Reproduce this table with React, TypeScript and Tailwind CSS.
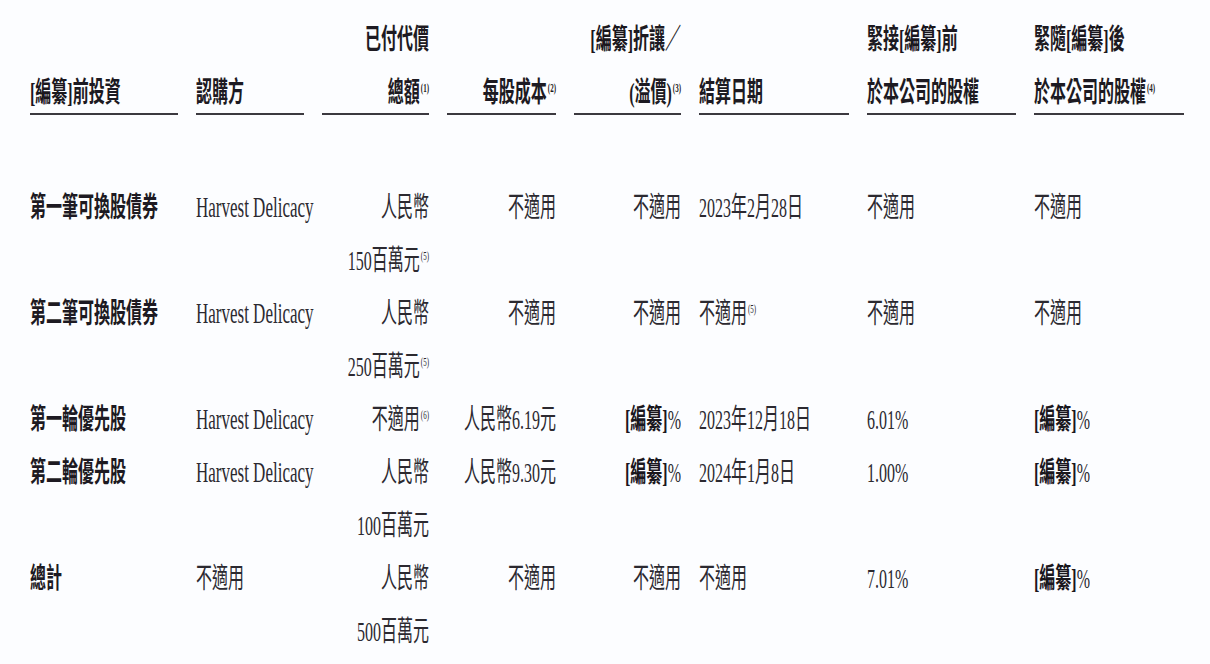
import React from 'react'

const grid = 'grid grid-cols-[148px_108px_107px_109px_107px_150px_149px_150px] gap-x-[18px]'

type Align = 'left' | 'right'

// text in the scan is squeezed sideways, so every run is stretched vertically
const T = ({ children, bold }: { children: React.ReactNode; bold?: boolean }) => (
  <span className={`inline-block origin-center scale-y-[1.75] ${bold ? 'font-bold text-[#1d1a22]' : 'font-normal text-[#2b2930]'}`}>
    {children}
  </span>
)

const Note = ({ n }: { n: number }) => (
  <span className="relative -top-[6px] ml-[1px] text-[7px] leading-none">({n})</span>
)

const Red = () => <span className="font-bold text-[#1a171d]">[編纂]</span>

const Latin = ({ children }: { children: React.ReactNode }) => <span className="text-[17px]">{children}</span>

const alignCls = (a: Align) => (a === 'right' ? 'text-right' : 'text-left')

const HeadCell = ({ top, bottom, align }: { top?: React.ReactNode; bottom: React.ReactNode; align: Align }) => (
  <div className="border-b-2 border-[#3b393f]">
    <div className={`-mb-[6px] leading-[53px] ${alignCls(align)}`}>
      <div className="h-[53px]">{top ? <T bold>{top}</T> : null}</div>
      <div className="h-[53px]">
        <T bold>{bottom}</T>
      </div>
    </div>
  </div>
)

const Cell = ({ lines, align, bold }: { lines: React.ReactNode[]; align: Align; bold?: boolean }) => (
  <div className={`leading-[53px] ${alignCls(align)}`}>
    {lines.map((l, i) => (
      <div key={i} className="h-[53px] whitespace-nowrap">
        <T bold={bold}>{l}</T>
      </div>
    ))}
  </div>
)

const aligns: Align[] = ['left', 'left', 'right', 'right', 'right', 'left', 'left', 'left']

const hd = <Latin>Harvest Delicacy</Latin>

const rows: React.ReactNode[][][] = [
  [
    ['第一筆可換股債券'],
    [hd],
    ['人民幣', <>150百萬元<Note n={5} /></>],
    ['不適用'],
    ['不適用'],
    ['2023年2月28日'],
    ['不適用'],
    ['不適用'],
  ],
  [
    ['第二筆可換股債券'],
    [hd],
    ['人民幣', <>250百萬元<Note n={5} /></>],
    ['不適用'],
    ['不適用'],
    [<>不適用<Note n={5} /></>],
    ['不適用'],
    ['不適用'],
  ],
  [
    ['第一輪優先股'],
    [hd],
    [<>不適用<Note n={6} /></>],
    ['人民幣6.19元'],
    [<><Red />%</>],
    ['2023年12月18日'],
    ['6.01%'],
    [<><Red />%</>],
  ],
  [
    ['第二輪優先股'],
    [hd],
    ['人民幣', '100百萬元'],
    ['人民幣9.30元'],
    [<><Red />%</>],
    ['2024年1月8日'],
    ['1.00%'],
    [<><Red />%</>],
  ],
  [
    ['總計'],
    ['不適用'],
    ['人民幣', '500百萬元'],
    ['不適用'],
    ['不適用'],
    ['不適用'],
    ['7.01%'],
    [<><Red />%</>],
  ],
]

export default function App() {
  return (
    <div
      className="h-[664px] w-[1210px] overflow-hidden bg-[#fcfdff] pl-[30px] pt-[13px] text-[16px]"
      style={{ fontFamily: "'Liberation Serif', 'Noto Sans CJK TC', serif" }}
    >
      {/* 表頭 */}
      <div className={`${grid} items-end`}>
        <HeadCell align="left" bottom={<><Red />前投資</>} />
        <HeadCell align="left" bottom="認購方" />
        <HeadCell align="right" top="已付代價" bottom={<>總額<Note n={1} /></>} />
        <HeadCell align="right" bottom={<>每股成本<Note n={2} /></>} />
        <HeadCell align="right" top={<><Red />折讓／</>} bottom={<>(溢價)<Note n={3} /></>} />
        <HeadCell align="left" bottom="結算日期" />
        <HeadCell align="left" top={<>緊接<Red />前</>} bottom="於本公司的股權" />
        <HeadCell align="left" top={<>緊隨<Red />後</>} bottom={<>於本公司的股權<Note n={4} /></>} />
      </div>

      {/* 內容 */}
      <div className="mt-[66px]">
        {rows.map((row, r) => (
          <div key={r} className={grid}>
            {row.map((lines, c) => (
              <Cell key={c} lines={lines} align={aligns[c]} bold={c === 0} />
            ))}
          </div>
        ))}
      </div>
    </div>
  )
}
